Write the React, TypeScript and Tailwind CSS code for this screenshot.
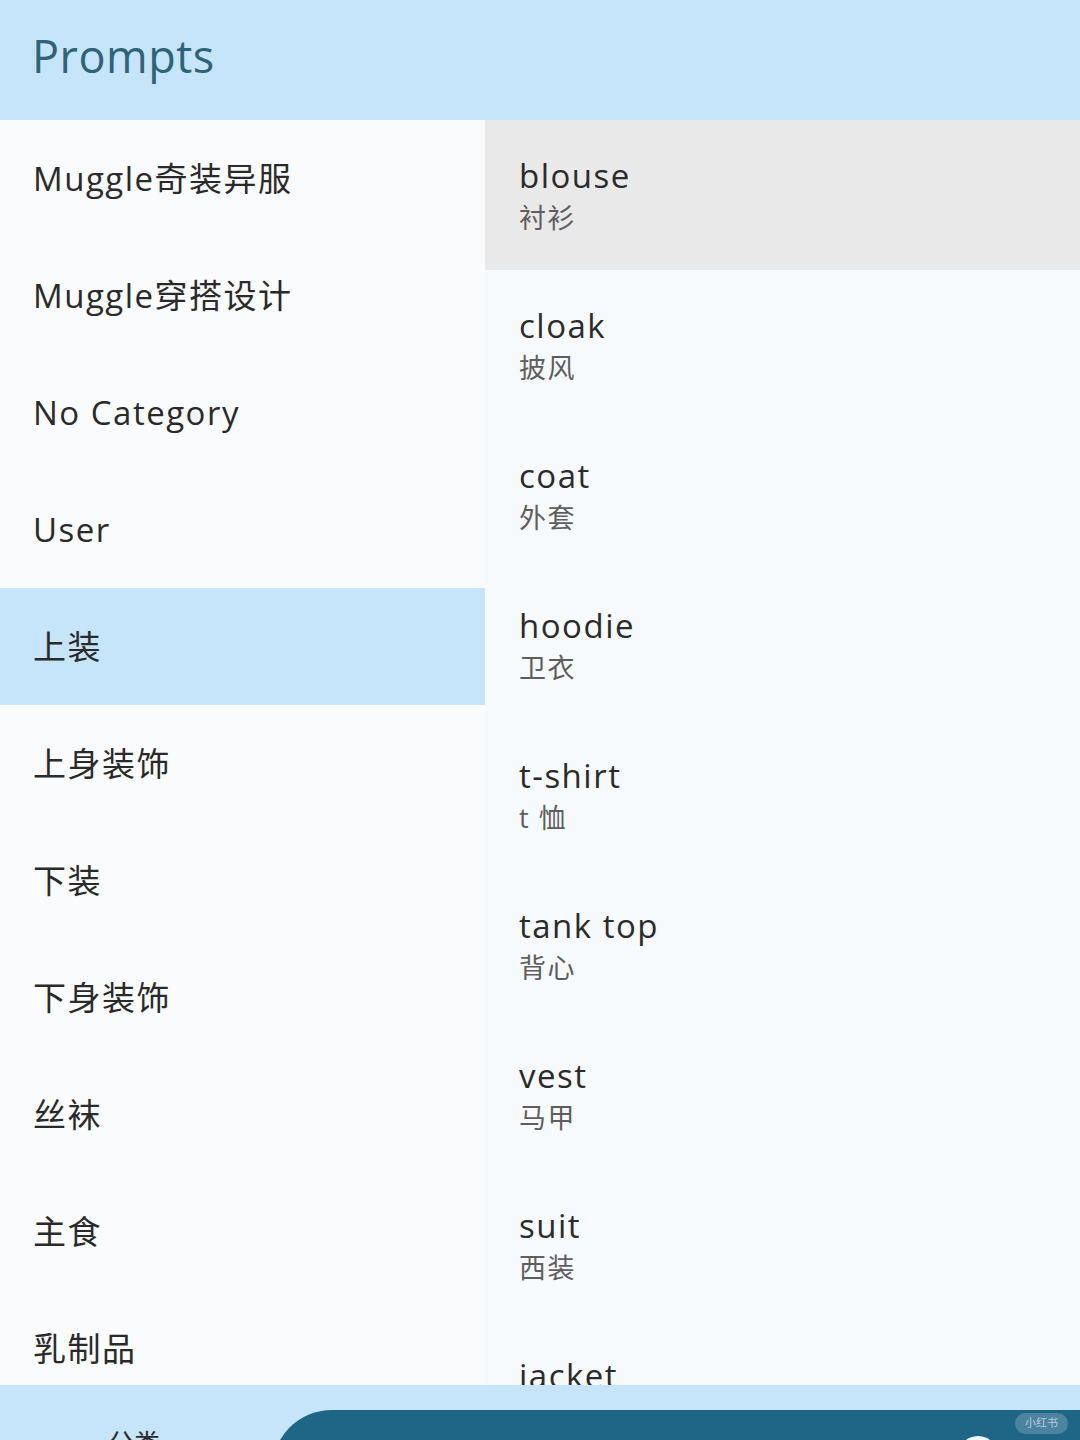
import React from 'react';

const categories = [
  'Muggle奇装异服',
  'Muggle穿搭设计',
  'No Category',
  'User',
  '上装',
  '上身装饰',
  '下装',
  '下身装饰',
  '丝袜',
  '主食',
  '乳制品',
  '其他',
];

const prompts = [
  { en: 'blouse', zh: '衬衫' },
  { en: 'cloak', zh: '披风' },
  { en: 'coat', zh: '外套' },
  { en: 'hoodie', zh: '卫衣' },
  { en: 't-shirt', zh: 't 恤' },
  { en: 'tank top', zh: '背心' },
  { en: 'vest', zh: '马甲' },
  { en: 'suit', zh: '西装' },
  { en: 'jacket', zh: '夹克' },
];

const font = { fontFamily: '"Open Sans", "Noto Sans CJK SC", sans-serif' };

export default function App() {
  const selectedCategory = 4;
  const selectedPrompt = 0;

  return (
    <div className="flex h-[1440px] w-[1080px] flex-col overflow-hidden bg-[#f8fafc]" style={font}>
      <header className="flex h-[120px] shrink-0 items-center bg-[#c6e4fa] pl-[32px]">
        <h1 className="pb-[10px] text-[45px] leading-none tracking-[0.5px] text-[#2f6478]">Prompts</h1>
      </header>

      <main className="flex h-[1265px] shrink-0 overflow-hidden">
        <nav className="w-[485px] shrink-0 bg-[#f9fbfd]">
          {categories.map((c, i) => (
            <div
              key={c}
              className={
                'flex h-[117px] items-center pl-[33px] text-[33px] tracking-[1.5px] text-[#2a2a2a] ' +
                (i === selectedCategory ? 'bg-[#c6e4fa]' : '')
              }
            >
              {c}
            </div>
          ))}
        </nav>

        <section className="flex-1 bg-[#f7fafc]">
          {prompts.map((p, i) => (
            <div
              key={p.en}
              className={
                'flex h-[150px] flex-col pl-[34px] pt-[34px] ' +
                (i === selectedPrompt ? 'bg-[#e9e9ea]' : '')
              }
            >
              <span className="text-[33px] leading-[44px] tracking-[1.5px] text-[#2b2b2b]">{p.en}</span>
              <span className="text-[27px] leading-[40px] tracking-[1.5px] text-[#5e5e5e]">{p.zh}</span>
            </div>
          ))}
        </section>
      </main>

      <footer className="relative flex h-[55px] shrink-0 bg-[#c6e4fa]">
        <div className="w-[272px] shrink-0 pl-[108px] pt-[45px] text-[26px] leading-none text-[#2a2a2a]">
          分类
        </div>
        <div className="mt-[25px] flex h-[80px] flex-1 items-start justify-end rounded-tl-[60px] bg-[#1f6686] pr-[82px] pt-[26px]">
          <div className="h-[40px] w-[40px] rounded-full bg-[#eef6fb]" />
        </div>
        <div className="absolute right-[12px] top-[28px] rounded-full bg-[#ffffff]/20 px-[10px] py-[2px] text-[11px] text-white/60">
          小红书
        </div>
      </footer>
    </div>
  );
}
